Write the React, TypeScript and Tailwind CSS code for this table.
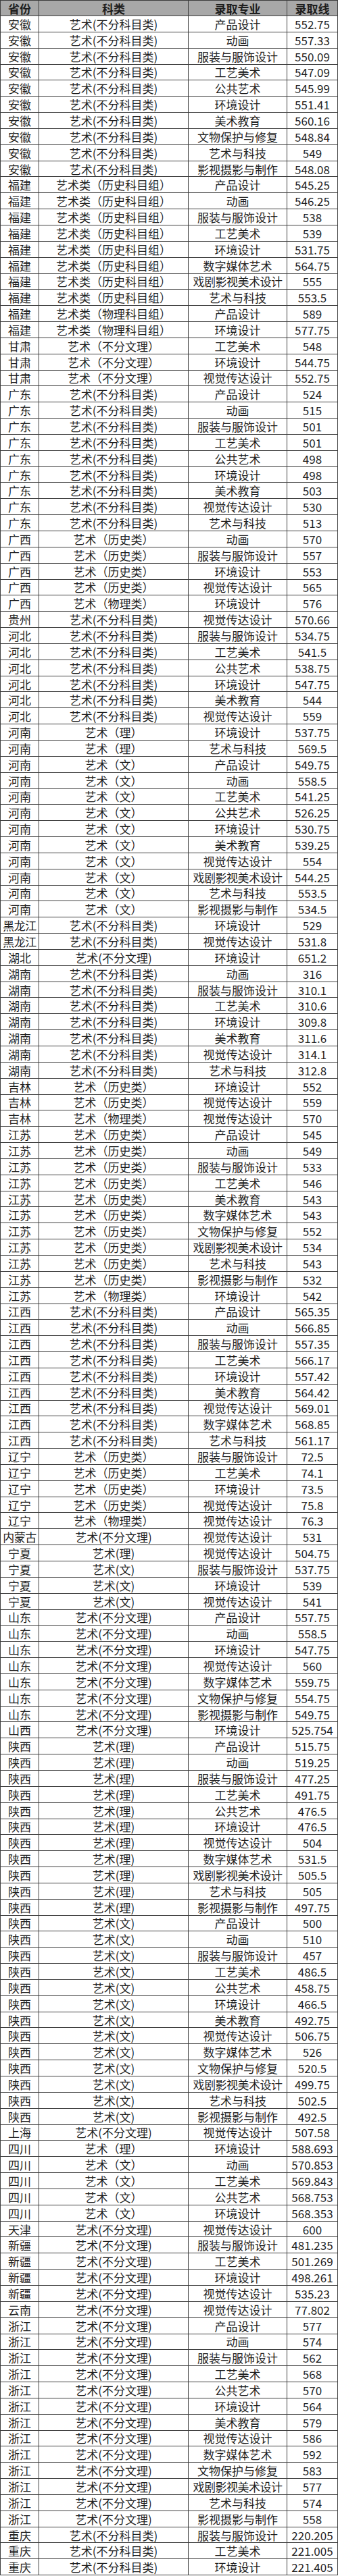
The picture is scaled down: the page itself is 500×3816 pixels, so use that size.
type Row = [string, string, string, string];

// each block: province, category, then "major score" pairs separated by |
function block(province: string, category: string, items: string): Row[] {
  return items.split('|').map((it) => {
    const [major, score] = it.trim().split(' ');
    return [province, category, major, score];
  });
}

const NOSUB = '艺术(不分科目类)';
const NOWL = '艺术(不分文理)';

const rows: Row[] = [
  ...block('安徽', NOSUB, '产品设计 552.75|动画 557.33|服装与服饰设计 550.09|工艺美术 547.09|公共艺术 545.99|环境设计 551.41|美术教育 560.16|文物保护与修复 548.84|艺术与科技 549|影视摄影与制作 548.08'),
  ...block('福建', '艺术类（历史科目组）', '产品设计 545.25|动画 546.25|服装与服饰设计 538|工艺美术 539|环境设计 531.75|数字媒体艺术 564.75|戏剧影视美术设计 555|艺术与科技 553.5'),
  ...block('福建', '艺术类（物理科目组）', '产品设计 589|环境设计 577.75'),
  ...block('甘肃', '艺术（不分文理）', '工艺美术 548|环境设计 544.75|视觉传达设计 552.75'),
  ...block('广东', NOSUB, '产品设计 524|动画 515|服装与服饰设计 501|工艺美术 501|公共艺术 498|环境设计 498|美术教育 503|视觉传达设计 530|艺术与科技 513'),
  ...block('广西', '艺术（历史类）', '动画 570|服装与服饰设计 557|环境设计 553|视觉传达设计 565'),
  ...block('广西', '艺术（物理类）', '环境设计 576'),
  ...block('贵州', NOSUB, '视觉传达设计 570.66'),
  ...block('河北', NOSUB, '服装与服饰设计 534.75|工艺美术 541.5|公共艺术 538.75|环境设计 547.75|美术教育 544|视觉传达设计 559'),
  ...block('河南', '艺术（理）', '环境设计 537.75|艺术与科技 569.5'),
  ...block('河南', '艺术（文）', '产品设计 549.75|动画 558.5|工艺美术 541.25|公共艺术 526.25|环境设计 530.75|美术教育 539.25|视觉传达设计 554|戏剧影视美术设计 544.25|艺术与科技 553.5|影视摄影与制作 534.5'),
  ...block('黑龙江', NOSUB, '环境设计 529|视觉传达设计 531.8'),
  ...block('湖北', NOWL, '环境设计 651.2'),
  ...block('湖南', NOSUB, '动画 316|服装与服饰设计 310.1|工艺美术 310.6|环境设计 309.8|美术教育 311.6|视觉传达设计 314.1|艺术与科技 312.8'),
  ...block('吉林', '艺术（历史类）', '环境设计 552|视觉传达设计 559'),
  ...block('吉林', '艺术（物理类）', '视觉传达设计 570'),
  ...block('江苏', '艺术（历史类）', '产品设计 545|动画 549|服装与服饰设计 533|工艺美术 546|美术教育 543|数字媒体艺术 543|文物保护与修复 552|戏剧影视美术设计 534|艺术与科技 543|影视摄影与制作 532'),
  ...block('江苏', '艺术（物理类）', '环境设计 542'),
  ...block('江西', NOSUB, '产品设计 565.35|动画 566.85|服装与服饰设计 557.35|工艺美术 566.17|环境设计 557.42|美术教育 564.42|视觉传达设计 569.01|数字媒体艺术 568.85|艺术与科技 561.17'),
  ...block('辽宁', '艺术（历史类）', '服装与服饰设计 72.5|工艺美术 74.1|环境设计 73.5|视觉传达设计 75.8'),
  ...block('辽宁', '艺术（物理类）', '视觉传达设计 76.3'),
  ...block('内蒙古', NOWL, '视觉传达设计 531'),
  ...block('宁夏', '艺术(理)', '视觉传达设计 504.75'),
  ...block('宁夏', '艺术(文)', '服装与服饰设计 537.75|环境设计 539|视觉传达设计 541'),
  ...block('山东', NOWL, '产品设计 557.75|动画 558.5|环境设计 547.75|视觉传达设计 560|数字媒体艺术 559.75|文物保护与修复 554.75|影视摄影与制作 549.75'),
  ...block('山西', NOWL, '环境设计 525.754'),
  ...block('陕西', '艺术(理)', '产品设计 515.75|动画 519.25|服装与服饰设计 477.25|工艺美术 491.75|公共艺术 476.5|环境设计 476.5|视觉传达设计 504|数字媒体艺术 531.5|戏剧影视美术设计 505.5|艺术与科技 505|影视摄影与制作 497.75'),
  ...block('陕西', '艺术(文)', '产品设计 500|动画 510|服装与服饰设计 457|工艺美术 486.5|公共艺术 458.75|环境设计 466.5|美术教育 492.75|视觉传达设计 506.75|数字媒体艺术 526|文物保护与修复 520.5|戏剧影视美术设计 499.75|艺术与科技 502.5|影视摄影与制作 492.5'),
  ...block('上海', NOWL, '视觉传达设计 507.58'),
  ...block('四川', '艺术（理）', '环境设计 588.693'),
  ...block('四川', '艺术（文）', '动画 570.853|工艺美术 569.843|公共艺术 568.753|环境设计 568.353'),
  ...block('天津', NOWL, '视觉传达设计 600'),
  ...block('新疆', NOWL, '服装与服饰设计 481.235|工艺美术 501.269|环境设计 498.261|视觉传达设计 535.23'),
  ...block('云南', NOWL, '视觉传达设计 77.802'),
  ...block('浙江', NOWL, '产品设计 577|动画 574|服装与服饰设计 562|工艺美术 568|公共艺术 570|环境设计 564|美术教育 579|视觉传达设计 586|数字媒体艺术 592|文物保护与修复 583|戏剧影视美术设计 577|艺术与科技 574|影视摄影与制作 558'),
  ...block('重庆', NOSUB, '服装与服饰设计 220.205|工艺美术 221.005|环境设计 221.405'),
];

const gridCols = 'grid grid-cols-[57px_221px_146px_75px] border-l border-[#3c3c3c]';
const cell = 'flex items-center justify-center overflow-hidden whitespace-nowrap border-r border-[#3c3c3c]';

function HeaderRow() {
  return (
    <div className={`${gridCols} h-[24px] border-y border-[#3c3c3c] bg-[#a8a8a8] text-[17px] font-bold text-[#1e1e1e]`}>
      <div className={cell}>省份</div>
      <div className={cell}>科类</div>
      <div className={cell}>录取专业</div>
      <div className={cell}>录取线</div>
    </div>
  );
}

function DataRow({ row }: { row: Row }) {
  const [province, category, major, score] = row;
  return (
    <div className={`${gridCols} h-[23.85px] border-b border-[#3c3c3c]`}>
      <div className={`${cell} ${province.length > 2 ? 'tracking-[-0.5px]' : ''}`}>{province}</div>
      <div className={cell}>{category}</div>
      <div className={`${cell} ${major.length > 7 ? 'tracking-[-0.5px]' : ''}`}>{major}</div>
      <div className={cell}>{score}</div>
    </div>
  );
}

export default function App() {
  return (
    <div className="w-[500px] bg-white font-['Noto_Sans_CJK_SC',sans-serif] text-[17px] leading-none text-[#1f1f1f]">
      <HeaderRow />
      {rows.map((r, i) => (
        <DataRow key={i} row={r} />
      ))}
    </div>
  );
}
